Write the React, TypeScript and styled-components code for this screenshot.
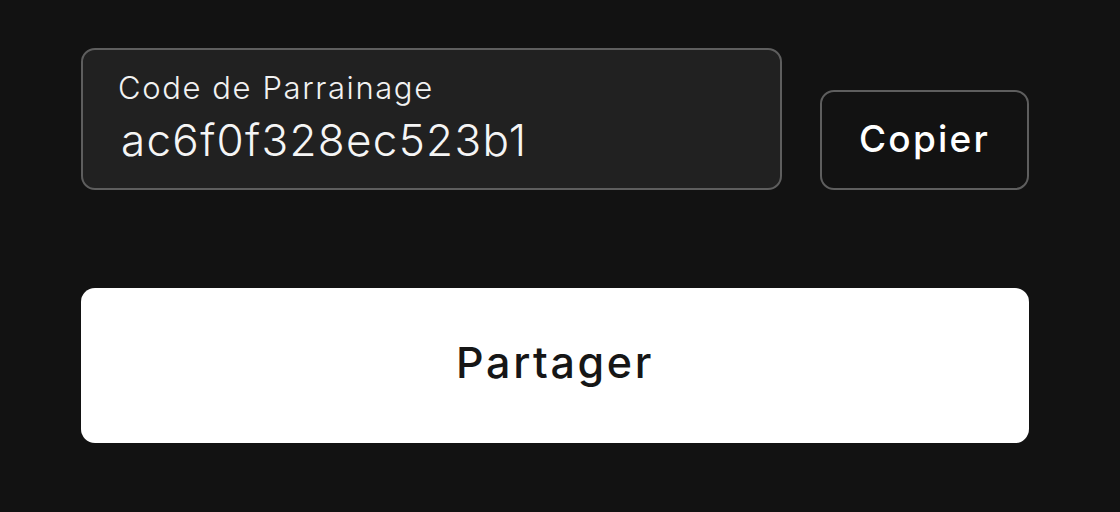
import React from "react";
import styled, { createGlobalStyle } from "styled-components";

const GlobalStyle = createGlobalStyle`
  html, body {
    margin: 0;
    padding: 0;
    background: #121212;
    font-family: Inter, "Noto Sans", sans-serif;
  }
`;

const Page = styled.div`
  width: 1120px;
  height: 512px;
  box-sizing: border-box;
  padding: 48px 91px 0 81px;
  display: flex;
  flex-direction: column;
  gap: 98px;
`;

const CodeRow = styled.div`
  display: flex;
  align-items: flex-end;
  gap: 38px;
`;

const CodeField = styled.div`
  width: 701px;
  height: 142px;
  box-sizing: border-box;
  background: #212121;
  border: 2px solid #5e5e5e;
  border-radius: 14px;
  padding: 18px 0 0 35px;
  display: flex;
  flex-direction: column;
`;

const FieldLabel = styled.span`
  color: #f2f2f2;
  font-size: 31px;
  font-weight: 300;
  line-height: 40px;
  letter-spacing: 1.6px;
`;

const FieldValue = styled.span`
  color: #f5f5f5;
  font-size: 44px;
  font-weight: 300;
  line-height: 56px;
  letter-spacing: 1.3px;
  padding: 4px 0 0 3px;
`;

const OutlineButton = styled.button`
  width: 209px;
  height: 100px;
  box-sizing: border-box;
  background: #121212;
  border: 2px solid #5e5e5e;
  border-radius: 14px;
  color: #ffffff;
  font-family: Inter, "Noto Sans", sans-serif;
  font-size: 37px;
  font-weight: 500;
  letter-spacing: 2.2px;
  padding: 0 0 4px;
  cursor: pointer;
`;

const PrimaryButton = styled.button`
  width: 948px;
  height: 155px;
  background: #ffffff;
  border: none;
  border-radius: 14px;
  color: #161616;
  font-family: Inter, "Noto Sans", sans-serif;
  font-size: 43px;
  font-weight: 500;
  letter-spacing: 2.6px;
  padding: 0 0 8px;
  cursor: pointer;
`;

export default function App() {
  return (
    <>
      <GlobalStyle />
      <Page>
        <CodeRow>
          <CodeField>
            <FieldLabel>Code de Parrainage</FieldLabel>
            <FieldValue>ac6f0f328ec523b1</FieldValue>
          </CodeField>
          <OutlineButton>Copier</OutlineButton>
        </CodeRow>
        <PrimaryButton>Partager</PrimaryButton>
      </Page>
    </>
  );
}
